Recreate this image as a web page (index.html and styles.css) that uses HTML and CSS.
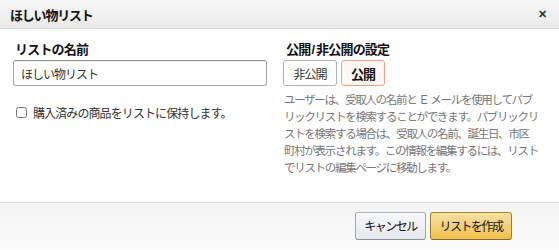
FILE: index.html
```html
<!DOCTYPE html>
<html lang="ja">
<head>
  <meta charset="UTF-8">
  <title>ほしい物リスト</title>
  <link rel="stylesheet" href="styles.css">
</head>
<body>
  <div class="modal">
    <div class="modal-header">
      <h4>ほしい物リスト</h4>
      <span class="close">✕</span>
    </div>

    <div class="modal-body">
      <div class="col-left">
        <label class="field-label">リストの名前</label>
        <input class="text-input" type="text" value="ほしい物リスト">
        <label class="check">
          <input type="checkbox">
          <span>購入済みの商品をリストに保持します。</span>
        </label>
      </div>

      <div class="col-right">
        <label class="field-label">公開<span class="slash">/</span>非公開の設定</label>
        <div class="toggle">
          <button class="toggle-btn">非公開</button>
          <button class="toggle-btn selected">公開</button>
        </div>
        <p class="hint">ユーザーは、受取人の名前と Ｅ メールを使用してパブ<br>リックリストを検索することができます。パブリックリ<br>ストを検索する場合は、受取人の名前、誕生日、市区<br>町村が表示されます。この情報を編集するには、リスト<br>でリストの編集ページに移動します。</p>
      </div>
    </div>

    <div class="modal-footer">
      <button class="btn">キャンセル</button>
      <button class="btn primary">リストを作成</button>
    </div>
  </div>
</body>
</html>
```

FILE: styles.css
```css
body {
  margin: 0;
  font-family: "Liberation Sans", Arial, "Noto Sans CJK JP", sans-serif;
  font-size: 13px;
  color: #111;
  background: #fff;
}
.modal {
  width: 559px;
  height: 250px;
  display: flex;
  flex-direction: column;
  overflow: hidden;
}
.modal-header {
  height: 29px;
  box-sizing: border-box;
  display: flex;
  align-items: center;
  justify-content: space-between;
  padding: 0 12px 0 10px;
  background: linear-gradient(#f7f7f7, #eaeaea);
  border-bottom: 1px solid #d8d8d8;
}
.modal-header h4 {
  margin: 0;
  font-size: 13px;
  font-weight: bold;
  letter-spacing: -1.2px;
}
.close {
  font-size: 11px;
  font-weight: bold;
  color: #333;
}
.modal-body {
  flex: 1;
  display: flex;
  padding: 12px 13px 0;
  gap: 17px;
}
.col-left {
  width: 254px;
}
.col-right {
  flex: 1;
}
.field-label {
  display: block;
  font-weight: bold;
  font-size: 13px;
  line-height: 18px;
  letter-spacing: -0.8px;
  margin: 0 0 1px 2px;
}
.slash {
  letter-spacing: 0;
  margin: 0 1px;
}
.text-input {
  display: block;
  width: 254px;
  height: 26px;
  box-sizing: border-box;
  border: 1px solid #a6a6a6;
  border-top-color: #949494;
  border-radius: 3px;
  padding: 0 7px;
  font-family: inherit;
  font-size: 12px;
  letter-spacing: -1px;
  color: #333;
  box-shadow: 0 1px 0 rgba(255,255,255,.5), 0 1px 0 rgba(0,0,0,.07) inset;
}
.check {
  display: flex;
  align-items: center;
  margin: 18px 0 0 2px;
  font-size: 12px;
  letter-spacing: -0.9px;
  color: #333;
}
.check input {
  width: 11px;
  height: 11px;
  margin: 0 6px 0 1px;
}
.toggle {
  display: flex;
  gap: 4px;
  margin-left: -1px;
}
.toggle-btn {
  height: 26px;
  width: 54px;
  box-sizing: border-box;
  padding: 0;
  border: 1px solid #adb1b8;
  border-radius: 3px;
  background: #fff;
  font-family: inherit;
  font-size: 12px;
  letter-spacing: -1px;
  color: #333;
}
.toggle-btn.selected {
  width: 44px;
  border-color: #f3a383;
  background: #fef8f3;
  font-weight: bold;
  font-size: 13px;
  color: #111;
}
.hint {
  margin: 6px 0 0;
  font-size: 11.5px;
  letter-spacing: -1.3px;
  line-height: 17px;
  color: #777;
  white-space: nowrap;
}
.modal-footer {
  height: 48px;
  box-sizing: border-box;
  border-top: 1px solid #ddd;
  background: linear-gradient(#f3f3f3, #fcfcfc);
  display: flex;
  justify-content: flex-end;
  align-items: center;
  gap: 4px;
  padding: 0 47px 2px 0;
}
.btn {
  height: 28px;
  width: 71px;
  box-sizing: border-box;
  border: 1px solid #adb1b8;
  border-color: #adb1b8 #a2a6ac #8d9096;
  border-radius: 3px;
  background: linear-gradient(#f7f8fa, #e7e9ec);
  font-family: inherit;
  font-size: 12px;
  letter-spacing: -1.5px;
  color: #111;
  padding: 0;
}
.btn.primary {
  width: 82px;
  border-color: #a88734 #9c7e31 #846a29;
  background: linear-gradient(#f7dfa5, #f0c14b);
}
```
